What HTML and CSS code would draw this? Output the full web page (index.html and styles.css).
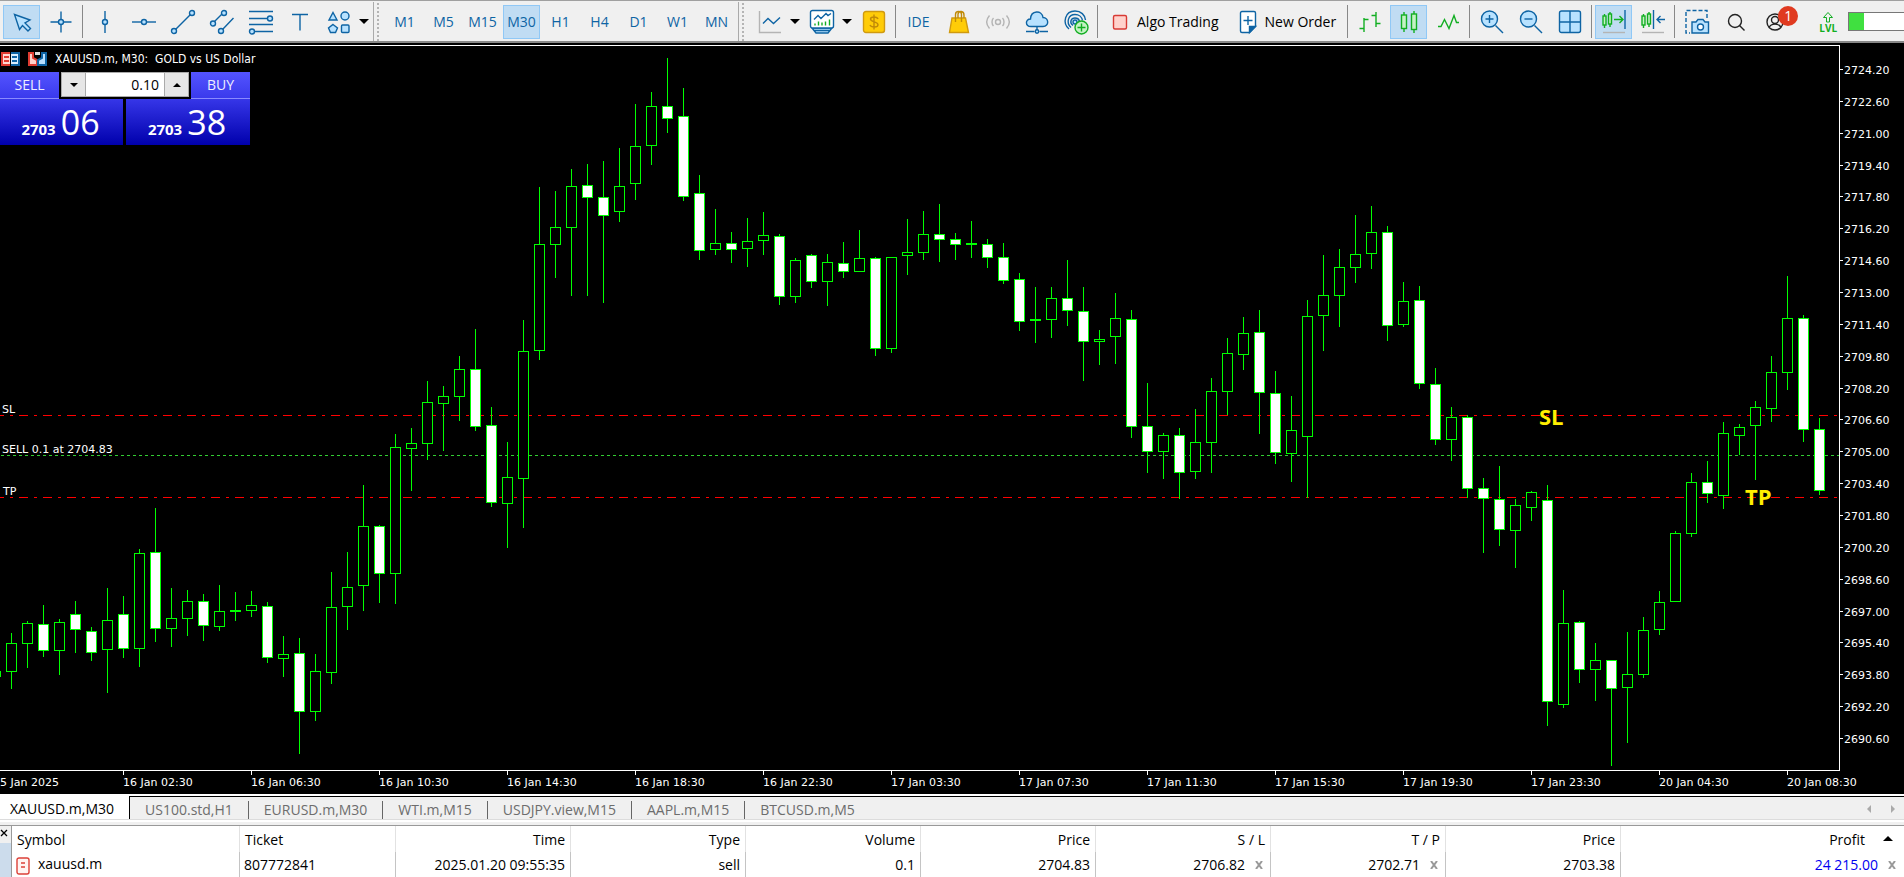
FILE: index.html
```
<!DOCTYPE html>
<html lang="en">
<head>
  <meta charset="UTF-8" />
  <meta name="viewport" content="width=device-width, initial-scale=1.0"/>
  <title>XAUUSD.m, M30</title>
  <link rel="stylesheet" href="styles.css">
</head>
<body>
  <header class="toolbar">
    <button class="tool active" aria-label="Cursor"><svg class="icon" viewBox="0 0 24 24"><path class="fill" d="M4.500 4.500L20 10l-5 3 5.500 5.500-2.500 2.500-5.500-5.500-3 4z"/></svg></button>
    <button class="tool" aria-label="Crosshair"><svg class="icon" viewBox="0 0 24 24"><path d="M12 1.500v8M12 14.500v8M1.500 12h8M14.500 12h8"/><circle class="fill" cx="12" cy="12" r="2.500"/></svg></button>
    <span class="sep"></span>
    <button class="tool" aria-label="Vertical line"><svg class="icon" viewBox="0 0 24 24"><path d="M12 1v22"/><circle class="fill" cx="12" cy="12" r="2.500"/></svg></button>
    <button class="tool" aria-label="Horizontal line"><svg class="icon" viewBox="0 0 24 24"><path d="M0 12h24"/><circle class="fill" cx="12" cy="12" r="2.500"/></svg></button>
    <button class="tool" aria-label="Trendline"><svg class="icon" viewBox="0 0 24 24"><path d="M4.500 19.500l15-15"/><circle class="fill" cx="3" cy="21" r="2.500"/><circle class="fill" cx="21" cy="3" r="2.500"/></svg></button>
    <button class="tool" aria-label="Channel"><svg class="icon" viewBox="0 0 24 24"><path d="M4.500 11.500l8-8M13 19L23.500 8"/><circle class="fill" cx="3" cy="13.500" r="2.500"/><circle class="fill" cx="14" cy="3" r="2.500"/><circle class="fill" cx="11" cy="21" r="2.500"/></svg></button>
    <button class="tool" aria-label="Fibonacci"><svg class="icon" viewBox="0 0 24 24"><path d="M0 1.500h24M0 8.500h18M0 14.500h24M6 21.500h18"/><circle class="fill" cx="21" cy="8.500" r="2.500"/><circle class="fill" cx="3" cy="21.500" r="2.500"/></svg></button>
    <button class="tool" aria-label="Text"><svg class="icon" viewBox="0 0 24 24"><path d="M4 4.500h16M12 4.500v16"/></svg></button>
    <div class="split">
      <button class="tool" aria-label="Shapes"><svg class="icon" viewBox="0 0 24 24"><path class="fill" d="M6 2.500l4 7.500H2zM6 14.500l4.500 3.500-2 4.500h-5l-2-4.500z"/><circle class="fill" cx="18" cy="6" r="4"/><rect class="fill" x="14.500" y="15" width="7.500" height="7.500" rx="1"/></svg></button>
      <button class="caret" aria-label="More shapes"></button>
    </div>
    <span class="sep edge"></span>
    <span class="grip"></span>
    <button class="tool">M1</button>
    <button class="tool">M5</button>
    <button class="tool">M15</button>
    <button class="tool active">M30</button>
    <button class="tool">H1</button>
    <button class="tool">H4</button>
    <button class="tool">D1</button>
    <button class="tool">W1</button>
    <button class="tool">MN</button>
    <span class="sep edge"></span>
    <span class="grip"></span>
    <div class="split">
      <button class="tool" aria-label="Chart type"><svg class="icon" viewBox="0 0 24 24"><path class="gray" d="M1.500 1v21.500H23"/><path d="M5 13.500l5-5 5.500 5L22 7.500"/></svg></button>
      <button class="caret" aria-label="More chart types"></button>
    </div>
    <div class="split">
      <button class="tool" aria-label="Indicators"><svg class="icon" viewBox="0 0 24 24"><path class="fill" d="M2 18l4 5h12l4-5zM4 20.500h16"/><rect class="paper" x="0.500" y="0.500" width="23" height="17.500" rx="2"/><path d="M4 9.500l4-4 3 3 5-5 2 2 3-2"/><path class="green" d="M5 15.500v-2M8.500 15.500v-4M12 15.500v-3M15.500 15.500v-4M19.500 15.500v-6"/></svg></button>
      <button class="caret" aria-label="More indicators"></button>
    </div>
    <button class="tool" aria-label="Market"><svg class="icon" viewBox="0 0 24 24"><rect class="gold" x="1.500" y="1.500" width="21" height="21" rx="2.500"/><path class="gold-line" d="M16 9c-1-3-7.500-2.500-7.500 0 0 3.300 7.500 2.300 7.500 5.800 0 3-7 2.800-8 .200M12 4.500v15"/></svg></button>
    <span class="sep"></span>
    <button class="tool wide">IDE</button>
    <button class="tool" aria-label="Store"><svg class="icon" viewBox="0 0 24 24"><path class="gold" d="M5 8h13.500l3 14.500H2.500z"/><path class="gold-line" d="M8.500 12V4.500c0-4 6-4 6 0V12M11 8V4c1-4 6-3 6 1v3"/></svg></button>
    <button class="tool" aria-label="Signals"><svg class="icon" viewBox="0 0 24 24"><g class="gray"><circle cx="12" cy="12" r="2.500"/><path d="M7.500 8c-2 2-2 6 0 8M16.500 8c2 2 2 6 0 8M3.500 5.500c-3.500 4-3.500 9 0 13M20.500 5.500c3.500 4 3.500 9 0 13"/></g></svg></button>
    <button class="tool" aria-label="VPS"><svg class="icon" viewBox="0 0 24 24"><path class="fill" d="M6 16.500c-6 0-6-7.500-.500-7.500C6 0 17 0 18 7.500c6 0 6.500 9 0 9z"/><path d="M12 16.500v4M1 21.500h8.500M14.500 21.500H23"/><circle class="fill" cx="12" cy="21.500" r="1.700"/></svg></button>
    <button class="tool" aria-label="Copy trading"><svg class="icon" viewBox="0 0 24 24"><path d="M5 19C-2 13 1 1 11 1c6 0 10 4 10.500 9M7 17.500C1.500 12.500 4.500 4.500 11 4.500c4 0 7 2.500 7.500 6M9 15.500c-4-3-2-7.500 2-7.500 3 0 4 1.500 4.500 3"/><circle class="fill" cx="11" cy="12" r="2"/><circle class="mint" cx="17.500" cy="17.500" r="6.500"/><path class="green" d="M17.500 13.500v8M13.500 17.500h8"/></svg></button>
    <span class="sep"></span>
    <button class="tool text"><svg class="icon" viewBox="0 0 24 24"><rect class="red" x="5.500" y="5.500" width="13" height="13.500" rx="1.500"/></svg>Algo Trading</button>
    <button class="tool text"><svg class="icon" viewBox="0 0 24 24"><path class="paper" d="M6 1.500h12q1.500 0 1.500 1.500v13.500l-6 6H6q-1.500 0-1.500-1.500V3q0-1.500 1.500-1.500z"/><path class="solid" d="M13.500 22.500v-6h6z"/><path d="M12 6v9M7.500 10.500h9"/></svg>New Order</button>
    <span class="sep"></span>
    <button class="tool" aria-label="Bar chart"><svg class="icon green" viewBox="0 0 24 24"><path d="M6 8v14M1.500 18.500H6M6 9.500h4.500M18 2v15M13.500 5.500H18M18 13.500h4.500"/></svg></button>
    <button class="tool active" aria-label="Candlesticks"><svg class="icon" viewBox="0 0 24 24"><path class="green" d="M7 2v20M17 1v22"/><rect class="mint" x="4.500" y="5" width="5" height="13.500"/><rect class="mint" x="14.500" y="4" width="5" height="15.500"/></svg></button>
    <button class="tool" aria-label="Line chart"><svg class="icon green" viewBox="0 0 24 24"><path d="M2 16.500h3l3.500-7 4.500 9 5-13 2.500 7H23"/></svg></button>
    <span class="sep"></span>
    <button class="tool" aria-label="Zoom in"><svg class="icon" viewBox="0 0 24 24"><path d="M15.500 15.500L23 23"/><circle class="fill" cx="9.500" cy="9" r="8"/><path d="M9.500 5v8M5.500 9h8"/></svg></button>
    <button class="tool" aria-label="Zoom out"><svg class="icon" viewBox="0 0 24 24"><path d="M15.500 15.500L23 23"/><circle class="fill" cx="9.500" cy="9" r="8"/><path d="M5.500 9h8"/></svg></button>
    <button class="tool" aria-label="Tile windows"><svg class="icon" viewBox="0 0 24 24"><rect class="fill" x="1.500" y="1" width="21" height="21.500" rx="2"/><path d="M12 1v21.500M1.500 12h21"/></svg></button>
    <span class="sep"></span>
    <button class="tool active" aria-label="Auto scroll"><svg class="icon" viewBox="0 0 24 24"><path class="green" d="M2.500 4v14M8 2v15M12 9.500h9M17.500 6l3.500 3.500-3.500 3.500"/><rect class="mint" x="1" y="6" width="3" height="9"/><rect class="mint" x="6.500" y="4" width="3" height="10"/><path d="M23 0v19"/><path class="gray" d="M1 22.500h22"/></svg></button>
    <button class="tool" aria-label="Chart shift"><svg class="icon" viewBox="0 0 24 24"><path class="green" d="M2.500 4v14M8 2v15"/><rect class="mint" x="1" y="6" width="3" height="9"/><rect class="mint" x="6.500" y="4" width="3" height="10"/><path d="M12.500 0v19M24 9.500h-8M19.500 6L16 9.500l3.500 3.500"/><path class="gray" d="M1 22.500h22"/></svg></button>
    <span class="sep"></span>
    <button class="tool" aria-label="Screenshot"><svg class="icon" viewBox="0 0 24 24"><path class="dash" d="M22 8V.500H1V23h4"/><path class="fill" d="M7 12h4l2-2.500h5l2 2.500h3.500v11H7z"/><circle class="paper" cx="15.500" cy="17" r="3"/></svg></button>
    <button class="tool" aria-label="Search"><svg class="icon dark" viewBox="0 0 24 24"><circle cx="11" cy="11" r="6.500"/><path d="M15.500 15.500l5 5"/></svg></button>
    <button class="tool account" aria-label="Account"><svg class="icon dark" viewBox="0 0 24 24"><circle cx="12" cy="12" r="8"/><circle cx="12" cy="10" r="3.500"/><path d="M6 17.500c2-4.500 10-4.500 12 0"/></svg><span class="badge">1</span></button>
    <div class="level"><svg class="arrow" viewBox="0 0 12 12"><path d="M4.500 11V6.500H1.500L6 1.500l4.500 5h-3V11z"/></svg>LVL</div>
    <div class="progress"><div class="progress-bar"></div></div>
  </header>

  <main class="chart">
    <svg class="plot" id="plot"></svg>
    <svg class="prices" id="prices"></svg>
    <svg class="times" id="times"></svg>

    <div class="overlay">
      <div class="caption">
        <svg class="mini" viewBox="0 0 19 14"><path fill="#ffd8d2" d="M0 0h9v14H0z"/><path fill="#d8eeff" d="M10 0h9v14h-9z"/><path stroke="#e03c32" stroke-width="2" d="M1 1h8M3 5h5M3 9h5M1 13h8M1 0v14"/><path stroke="#0e64a4" stroke-width="2" d="M10 1h8M11 5h5M11 9h5M10 13h8M18 0v14"/></svg>
        <svg class="mini" viewBox="0 0 19 14"><path fill="#ffd0ca" stroke="#e03c32" stroke-width="2" d="M1 1h4v5l4 2v5H1z"/><path fill="#b8e0ff" stroke="#0e64a4" stroke-width="2" d="M18 1h-4v5l-4 2v5h8z"/><path fill="#ddd" d="M7 0h5v3H7z"/></svg>
        <span>XAUUSD.m, M30:&nbsp; GOLD vs US Dollar</span>
      </div>
      <div class="trade">
        <button class="side">SELL</button>
        <div class="volume">
          <button class="step down" aria-label="Decrease volume"></button>
          <input type="text" value="0.10" aria-label="Volume">
          <button class="step up" aria-label="Increase volume"></button>
        </div>
        <button class="side">BUY</button>
        <button class="quote"><b>2703</b><span>06</span></button>
        <button class="quote"><b>2703</b><span>38</span></button>
      </div>
    </div>
  </main>

  <nav class="tabs">
    <a href="#" class="tab current">XAUUSD.m,M30</a>
    <a href="#" class="tab">US100.std,H1</a>
    <a href="#" class="tab">EURUSD.m,M30</a>
    <a href="#" class="tab">WTI.m,M15</a>
    <a href="#" class="tab">USDJPY.view,M15</a>
    <a href="#" class="tab">AAPL.m,M15</a>
    <a href="#" class="tab">BTCUSD.m,M5</a>
    <span class="scroll">
      <button class="scroll-btn left" aria-label="Scroll left"></button>
      <button class="scroll-btn right" aria-label="Scroll right"></button>
    </span>
  </nav>

  <section class="terminal">
    <div class="handle">
      <button class="close" aria-label="Close"><svg viewBox="0 0 8 8"><path d="M1 1l6 6M7 1L1 7"/></svg></button>
    </div>
    <table>
      <colgroup>
        <col class="c-symbol"><col class="c-ticket">
        <col class="c-std"><col class="c-std"><col class="c-std"><col class="c-std"><col class="c-std"><col class="c-std"><col class="c-std">
        <col>
      </colgroup>
      <thead>
        <tr>
          <th class="l">Symbol</th><th class="l">Ticket</th><th>Time</th><th>Type</th><th>Volume</th><th>Price</th><th>S / L</th><th>T / P</th><th>Price</th><th>Profit<span class="sort"></span></th>
        </tr>
      </thead>
      <tbody>
        <tr>
          <td class="l"><svg class="order" viewBox="0 0 14 18"><rect x="1" y="1" width="12" height="16" rx="2"/><path d="M5 6h4M5 10h4"/></svg>xauusd.m</td>
          <td class="l">807772841</td>
          <td>2025.01.20 09:55:35</td>
          <td>sell</td>
          <td>0.1</td>
          <td>2704.83</td>
          <td>2706.82<button class="clear" aria-label="Remove S/L"><svg viewBox="0 0 8 8"><path d="M1 0l6 8M7 0L1 8"/></svg></button></td>
          <td>2702.71<button class="clear" aria-label="Remove T/P"><svg viewBox="0 0 8 8"><path d="M1 0l6 8M7 0L1 8"/></svg></button></td>
          <td>2703.38</td>
          <td class="profit">24 215.00<button class="clear" aria-label="Close position"><svg viewBox="0 0 8 8"><path d="M1 0l6 8M7 0L1 8"/></svg></button></td>
        </tr>
      </tbody>
    </table>
  </section>

  <script src="chart.js"></script>
</body>
</html>
```
FILE: styles.css
```
:root {
  --panel: #f0f0f0;
  --blue: #0e64a4;
  --sky: #b8e2ff;
  --green: #12ae22;
  --hover: #c0dcf3;
  --lime: #00ff00;
}
* {
  box-sizing: border-box;
}
body {
  margin: 0;
  height: 100vh;
  display: flex;
  flex-direction: column;
  overflow: hidden;
  background: var(--panel);
  color: #000;
  font: 14px/20px "Open Sans", "Noto Sans", sans-serif;
}
button {
  font: inherit;
  color: inherit;
  border: none;
  background: none;
  padding: 0;
  cursor: pointer;
}

/* toolbar */
.toolbar {
  flex: none;
  display: flex;
  align-items: center;
  gap: 2px;
  height: 43px;
  padding: 1px 0 0 3px;
  border-top: 1px solid #a0a0a0;
  border-bottom: 2px solid #888;
  white-space: nowrap;
  overflow: hidden;
}
.tool {
  flex: none;
  width: 37px;
  height: 34px;
  display: flex;
  align-items: center;
  justify-content: center;
  border: 1px solid transparent;
  color: var(--blue);
}
.tool.active {
  background: var(--hover);
  border-color: #90c8f6;
}
.tool.wide {
  width: 39px;
}
.tool.text {
  width: auto;
  gap: 5px;
  padding: 0 7px 0 6px;
  color: #000;
}
.split {
  display: flex;
}
.caret {
  width: 13px;
  display: flex;
  align-items: center;
  justify-content: center;
}
.caret::before {
  content: "";
  border: 5px solid transparent;
  border-top-color: #000;
  border-bottom: none;
}
.sep {
  flex: none;
  width: 1px;
  height: 33px;
  margin: 0 1px;
  background: #888;
}
.sep.edge {
  height: 40px;
  margin: 0 0 0 1px;
  background: #aaa;
}
.grip {
  flex: none;
  width: 4px;
  height: 38px;
  margin: 0 3px 0 1px;
  background: repeating-linear-gradient(#b4b4b4 0 2px, transparent 2px 4px);
  background-size: 2px 4px;
  background-repeat: repeat-y;
}
.icon {
  width: 24px;
  height: 24px;
  fill: none;
  stroke: var(--blue);
  stroke-width: 1.4;
  overflow: visible;
}
.icon .fill { fill: var(--sky); }
.icon .solid { fill: var(--blue); }
.icon .paper { fill: #fff; }
.icon .gray, .icon.gray { stroke: #b4b4b4; }
.icon .green, .icon.green { stroke: var(--green); }
.icon .mint { fill: #c4f2c4; stroke: var(--green); }
.icon .gold { fill: #ffcc08; stroke: #d09a10; }
.icon .gold-line { stroke: #c08a08; }
.icon .red { fill: #ffd2cc; stroke: #d83a34; }
.icon .dash { stroke-dasharray: 4 2; }
.icon.dark { stroke: #222; }
.account {
  position: relative;
}
.badge {
  position: absolute;
  top: 0;
  right: -6px;
  width: 20px;
  height: 20px;
  border-radius: 50%;
  background: #e03a20;
  color: #fff;
  text-align: center;
}
.level {
  flex: none;
  width: 36px;
  display: flex;
  flex-direction: column;
  align-items: center;
  margin-left: 15px;
  color: var(--green);
  font-size: 10px;
  line-height: 10px;
  font-weight: 700;
}
.arrow {
  width: 12px;
  height: 12px;
  fill: none;
  stroke: var(--green);
}
.progress {
  flex: 1;
  min-width: 40px;
  height: 19px;
  border: 1px solid #777;
  border-right: none;
  background: #fff;
}
.progress-bar {
  width: 15px;
  height: 100%;
  background: #40e040;
}

/* chart */
.chart {
  flex: 1;
  min-height: 0;
  position: relative;
  display: grid;
  grid-template-columns: minmax(0, 1fr) 64px;
  grid-template-rows: minmax(0, 1fr) 23px;
  padding-top: 2px;
  background: #000;
  font: 11px "DejaVu Sans", sans-serif;
  color: #fff;
}
.plot, .prices, .times {
  display: block;
  width: 100%;
  height: 100%;
  fill: #fff;
  shape-rendering: crispEdges;
}
.plot {
  border: 1px solid #fff;
  border-left: none;
}
.times {
  grid-column: 1 / 3;
}
.tick {
  stroke: #fff;
}
.bull {
  fill: #000;
  stroke: var(--lime);
}
.bear {
  fill: #fff;
  stroke: var(--lime);
}
.stop {
  stroke: #f00;
  stroke-dasharray: 9 6 3 6;
}
.entry {
  stroke: #32cd32;
  stroke-dasharray: 3 3;
}
.mark {
  fill: #ffee00;
  font: 700 22px "Open Sans", "Noto Sans", sans-serif;
}
.overlay {
  position: absolute;
  top: 8px;
  left: 0;
}
.caption {
  display: flex;
  align-items: center;
  gap: 8px;
  height: 16px;
  padding-left: 1px;
  font: 12px "DejaVu Sans Condensed", "Noto Sans", sans-serif;
}
.mini {
  width: 19px;
  height: 14px;
  fill: none;
}
.trade {
  display: grid;
  grid-template-columns: 59px 65px 67px 59px;
  grid-template-rows: 27px 46px;
  margin-top: 5px;
  font: 14px/20px "Open Sans", "Noto Sans", sans-serif;
}
.side {
  border-bottom: 1px solid #8a8aff;
  background: linear-gradient(#5454ff, #3a3aec);
  color: #eef;
}
.volume {
  grid-column: 2 / 4;
  display: flex;
  height: 25px;
  margin: 0 2px;
  border: 1px solid #aaa;
  background: #fff;
}
.volume input {
  flex: 1;
  min-width: 0;
  border: none;
  padding: 0 5px;
  background: #fff;
  font: inherit;
  text-align: right;
}
.step {
  width: 24px;
  display: flex;
  align-items: center;
  justify-content: center;
  background: #e6e6e6;
}
.step::before {
  content: "";
  border: 4px solid transparent;
}
.step.down::before {
  border-top-color: #000;
  border-bottom: none;
}
.step.up::before {
  border-bottom-color: #000;
  border-top: none;
}
.step.down { border-right: 1px solid #aaa; }
.step.up { border-left: 1px solid #aaa; }
.quote {
  grid-column: span 2;
  display: flex;
  align-items: baseline;
  justify-content: center;
  gap: 5px;
  margin-right: 1px;
  padding-right: 2px;
  background: linear-gradient(#3636e8, #0000ac);
  color: #fff;
}
.quote + .quote {
  margin: 0 0 0 2px;
}
.quote b {
  font-size: 15px;
}
.quote span {
  font-size: 34px;
  line-height: 46px;
  font-weight: 400;
}

/* chart tabs */
.tabs {
  flex: none;
  display: flex;
  height: 32px;
  padding-bottom: 5px;
  border-top: 2px solid #fff;
  border-bottom: 1px solid #999;
  position: relative;
}
.tabs::after {
  content: "";
  position: absolute;
  left: 0;
  right: 0;
  bottom: 3px;
  height: 2px;
  background: #fff;
  border-top: 1px solid #dcdcdc;
}
.tab {
  display: flex;
  align-items: center;
  padding: 2px 15px 0;
  border-top: 1px solid #000;
  color: #6d6d6d;
  text-decoration: none;
}
.tab + .tab + .tab::before {
  content: "";
  width: 1px;
  height: 18px;
  margin: 0 15px 0 -15px;
  background: #666;
}
.tab.current {
  height: 24px;
  padding: 2px 15px 0 10px;
  background: #fff;
  border: solid #000;
  border-width: 0 1px 1px 0;
  color: #000;
}
.scroll {
  flex: 1;
  display: flex;
  align-items: center;
  justify-content: flex-end;
  gap: 20px;
  padding-right: 9px;
  border-top: 1px solid #000;
}
.scroll-btn {
  border: 4px solid transparent;
}
.scroll-btn.left {
  border-right-color: #aaa;
  border-left: none;
}
.scroll-btn.right {
  border-left-color: #aaa;
  border-right: none;
}

/* terminal */
.terminal {
  flex: none;
  display: flex;
}
.handle {
  flex: none;
  width: 11px;
  background: linear-gradient(var(--panel) 17px, #ccdcec 17px);
}
.close {
  display: block;
  width: 8px;
  height: 13px;
}
.close svg, .clear svg {
  display: block;
  width: 8px;
  height: 8px;
  fill: none;
  stroke: #000;
  stroke-width: 1.3;
}
.clear {
  margin: 0 2px 0 10px;
  vertical-align: 1px;
}
.clear svg {
  stroke: #999;
  stroke-width: 2;
}
table {
  flex: 1;
  width: 0;
  table-layout: fixed;
  border-collapse: separate;
  border-spacing: 0;
  background: #fff;
  border-left: 1px solid #999;
}
.c-symbol { width: 228px; }
.c-ticket { width: 156px; }
.c-std { width: 175px; }
th, td {
  height: 25px;
  padding: 0 5px;
  border-right: 1px solid #e2e2e2;
  font-weight: 400;
  line-height: 20px;
  text-align: right;
  white-space: nowrap;
}
td {
  border-color: #c4c4c4;
}
th {
  height: 26px;
  padding-top: 2px;
}
th:last-child, td:last-child {
  border-right: none;
  padding-right: 6px;
}
.l {
  text-align: left;
  padding-left: 4px;
}
th.l {
  padding-left: 5px;
}
.order {
  width: 14px;
  height: 18px;
  margin-right: 8px;
  vertical-align: middle;
  fill: #fff4f2;
  stroke: #dc4038;
  stroke-width: 1.4;
}
.sort {
  display: inline-block;
  margin: 0 5px 4px 18px;
  border: 5px solid transparent;
  border-bottom-color: #000;
  border-top: none;
}
.profit {
  color: #0000f0;
}
```
FILE: chart.js
```
// [high, body top, body bottom, low, bear] in screen rows
const candles = [
  [671,671,676,676,0],
  [633,643,671,688,0],[621,623,643,667,0],[605,624,650,656,1],[619,622,650,674,0],
  [601,614,629,652,1],[627,631,652,660,1],[588,620,649,692,0],[596,614,648,657,1],
  [549,553,648,666,0],[508,552,628,641,1],[588,618,628,646,0],[590,601,618,635,0],
  [594,601,625,640,1],[585,611,626,630,0],[592,610,611,620,0],[591,605,610,616,0],
  [602,606,657,662,1],[636,654,658,676,0],[638,653,711,753,1],[654,671,711,720,0],
  [572,607,672,683,0],[552,587,606,629,0],[485,526,585,610,0],[525,526,573,602,1],
  [434,447,573,603,0],[428,443,448,490,0],[381,402,443,459,0],[386,396,403,450,0],
  [356,369,396,420,0],[329,369,426,430,1],[407,425,502,506,1],[442,477,503,547,0],
  [320,351,478,527,0],[187,244,350,359,0],[191,227,244,277,0],[169,186,227,295,0],
  [164,185,197,295,1],[161,197,215,302,1],[148,186,211,221,0],[104,146,183,199,0],
  [92,106,145,164,0],[58,106,118,132,1],[88,116,196,200,1],[175,193,250,259,1],
  [209,243,249,254,0],[232,243,249,262,1],[218,241,248,266,0],[212,235,240,254,0],
  [234,236,296,304,1],[258,260,296,302,0],[254,255,281,287,1],[254,262,281,305,0],
  [242,263,271,277,1],[230,258,271,271,0],[257,258,348,355,1],[257,257,348,352,0],
  [219,252,255,274,0],[211,234,252,259,0],[204,234,239,261,1],[233,239,244,259,1],
  [221,243,244,257,0],[239,244,257,267,1],[243,257,280,283,1],[273,279,321,330,1],
  [287,319,320,342,0],[287,298,319,337,0],[260,298,310,325,1],[287,311,341,380,1],
  [330,339,341,364,0],[293,318,336,363,0],[310,319,426,437,1],[383,426,451,472,1],
  [433,435,451,478,0],[428,435,472,498,1],[409,442,471,478,0],[378,391,442,472,0],
  [338,353,391,414,0],[317,333,354,369,0],[310,332,392,433,1],[371,393,452,463,1],
  [396,430,453,481,0],[300,316,436,497,0],[255,295,315,350,0],[249,267,295,326,0],
  [215,254,267,282,0],[206,232,253,268,0],[226,232,325,340,1],[282,301,324,326,0],
  [286,300,383,388,1],[368,384,439,444,1],[407,417,439,460,0],[415,417,488,497,1],
  [478,488,498,552,1],[466,499,529,545,1],[499,505,530,567,0],[491,492,507,520,0],
  [485,500,701,725,1],[590,623,704,707,0],[621,622,669,682,1],[643,660,669,700,0],
  [660,660,688,765,1],[632,674,687,742,0],[617,630,674,677,0],[591,602,629,634,0],
  [531,533,601,601,0],[473,482,533,536,0],[461,482,493,502,1],[422,433,495,508,0],
  [424,427,435,454,0],[401,407,425,479,0],[356,372,408,421,0],[276,318,372,389,0],
  [315,318,429,441,1],[418,429,490,494,1]
];
const times = [
  "5 Jan 2025", "16 Jan 02:30", "16 Jan 06:30", "16 Jan 10:30", "16 Jan 14:30",
  "16 Jan 18:30", "16 Jan 22:30", "17 Jan 03:30", "17 Jan 07:30", "17 Jan 11:30",
  "17 Jan 15:30", "17 Jan 19:30", "17 Jan 23:30", "20 Jan 04:30", "20 Jan 08:30"
];
const TOP = 46;      // first row of the plot
const STEP = 16;     // distance between candles
const FIRST_X = -5;

function level(y, cls, from) {
  return `<line class="${cls}" x1="${from}" x2="100%" y1="${y - TOP + 0.5}" y2="${y - TOP + 0.5}"/>`;
}

function label(x, y, text, cls) {
  return `<text class="${cls || ""}" x="${x}" y="${y - TOP}">${text}</text>`;
}

let plot = level(415, "stop", -5) + level(455, "entry", 1) + level(497, "stop", -5);
candles.forEach(([high, top, bottom, low, bear], i) => {
  const x = FIRST_X + i * STEP;
  plot += `<g class="${bear ? "bear" : "bull"}">
    <line x1="${x + 0.5}" x2="${x + 0.5}" y1="${high - TOP}" y2="${low - TOP + 1}"/>
    <rect x="${x - 4.5}" y="${top - TOP + 0.5}" width="10" height="${bottom - top}"/>
  </g>`;
});
plot += label(2, 413, "SL") + label(2, 453, "SELL 0.1 at 2704.83") + label(3, 495, "TP");
plot += label(1539, 425, "SL", "mark") + label(1745, 505, "TP", "mark");
document.getElementById("plot").innerHTML = plot;

let prices = "";
for (let i = 0; i < 22; i++) {
  const y = Math.round(24 + i * 31.86);
  prices += `<line class="tick" x1="0" x2="3" y1="${y + 0.5}" y2="${y + 0.5}"/>`;
  prices += `<text x="4" y="${y + 5}">${(2724.2 - i * 1.6).toFixed(2)}</text>`;
}
document.getElementById("prices").innerHTML = prices;

document.getElementById("times").innerHTML = times.map((t, i) => {
  const x = FIRST_X + i * 8 * STEP;
  return `<line class="tick" x1="${x + 0.5}" x2="${x + 0.5}" y1="0" y2="4"/><text x="${Math.max(x, 0)}" y="15">${t}</text>`;
}).join("");
```
